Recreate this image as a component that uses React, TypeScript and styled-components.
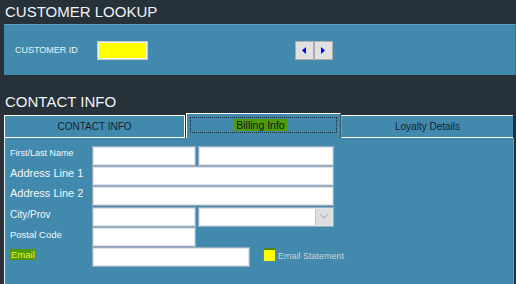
import React from 'react';
import styled, { createGlobalStyle } from 'styled-components';

const GlobalStyle = createGlobalStyle`
  html, body {
    margin: 0;
    padding: 0;
    background: #263139;
  }
  body {
    font-family: "Liberation Sans", Arial, sans-serif;
  }
`;

const Screen = styled.div`
  width: 516px;
  height: 284px;
  overflow: hidden;
  background: #263139;
`;

const SectionTitle = styled.h1<{ $top: number; $height: number }>`
  margin: 0;
  box-sizing: border-box;
  height: ${(p) => p.$height}px;
  padding: ${(p) => p.$top}px 0 0 5px;
  font-size: 15px;
  line-height: 17px;
  font-weight: normal;
  color: #f1f4f6;
`;

const LookupPanel = styled.div`
  margin-left: 4px;
  box-sizing: border-box;
  height: 51px;
  border-top: 1px solid #5ba1c4;
  border-right: 1px solid #33708f;
  background: #428aad;
  display: flex;
  align-items: center;
  padding-left: 11px;
`;

const LookupLabel = styled.span`
  width: 82px;
  font-size: 9px;
  color: #eef3f6;
`;

const IdInput = styled.input`
  width: 51px;
  height: 19px;
  box-sizing: border-box;
  margin: 0;
  padding: 0;
  background: #ffff00;
  border: 1px solid #c3ccd4;
  box-shadow: inset 0 0 0 1px #eef2f4;
  outline: none;
`;

const NavGroup = styled.div`
  display: flex;
  margin-left: 147px;
`;

const NavButton = styled.button`
  width: 19px;
  height: 19px;
  box-sizing: border-box;
  margin: 0;
  padding: 0;
  background: #e1e1e1;
  border: 1px solid #adadad;
  display: flex;
  align-items: center;
  justify-content: center;
  cursor: pointer;
`;

const TabRow = styled.div`
  display: flex;
  align-items: flex-end;
  margin-left: 4px;
  height: 25px;
`;

const Tab = styled.div<{ $width: number }>`
  width: ${(p) => p.$width}px;
  height: 23px;
  box-sizing: border-box;
  background: #428aad;
  border-top: 1px solid #ffffff;
  border-left: 1px solid #ffffff;
  border-bottom: 1px solid #ffffff;
  display: flex;
  align-items: center;
  justify-content: center;
  font-size: 10px;
  color: #17222c;
`;

const FirstTab = styled(Tab)`
  border-right: 1px solid #ffffff;
`;

const LastTab = styled(Tab)`
  border-left: 1px solid #9d8f80;
`;

const ActiveTab = styled.div`
  width: 155px;
  height: 25px;
  margin-left: 1px;
  box-sizing: border-box;
  background: #428aad;
  border-top: 1px solid #ffffff;
  border-left: 1px solid #ffffff;
  border-right: 1px solid #3b5566;
  padding: 3px 3px 5px 3px;
  display: flex;
`;

const FocusRing = styled.div`
  flex: 1;
  border: 1px dotted #1d2b36;
  display: flex;
  align-items: center;
  justify-content: center;
  padding-right: 6px;
`;

const Highlight = styled.span<{ $text?: string }>`
  background: #4f9a08;
  color: ${(p) => p.$text || '#10181e'};
  padding: 0 1px;
`;

const TabText = styled(Highlight)`
  font-size: 10.5px;
  padding: 0 2px;
`;

const ContentPanel = styled.div`
  margin-left: 4px;
  width: 510px;
  height: 146px;
  box-sizing: border-box;
  background: #428aad;
  border-left: 1px solid #e6eef2;
  border-right: 1px solid #86929c;
  padding: 8px 0 0 5px;
`;

const FormRow = styled.div`
  display: flex;
  align-items: flex-start;
  height: 20.2px;
`;

const FieldLabel = styled.div<{ $size: number }>`
  width: 82px;
  font-size: ${(p) => p.$size}px;
  line-height: 13px;
  padding-top: 1px;
  color: #f4f7f9;
  white-space: nowrap;
`;

const TextInput = styled.input<{ $width: number }>`
  width: ${(p) => p.$width}px;
  height: 20px;
  box-sizing: border-box;
  margin: 0 2px 0 0;
  padding: 0;
  background: #ffffff;
  border: 1px solid #9aabbc;
  box-shadow: inset 0 0 0 1px #dbe4ee;
  outline: none;
`;

const Select = styled.div`
  width: 136px;
  height: 20px;
  box-sizing: border-box;
  background: #ffffff;
  border: 1px solid #9aabbc;
  box-shadow: inset 0 0 0 1px #dbe4ee;
  display: flex;
  justify-content: flex-end;
  padding: 1px;
`;

const SelectArrow = styled.div`
  width: 16px;
  height: 100%;
  background: #dedede;
  border-left: 1px solid #c8c8c8;
  display: flex;
  align-items: center;
  justify-content: center;
`;

const CheckBox = styled.div`
  margin: 1px 0 0 11px;
  width: 12px;
  height: 13px;
  box-sizing: border-box;
  background: #ffff00;
  border-top: 2px solid #4e8a12;
  border-left: 1px solid #6a9a2a;
`;

const CheckLabel = styled.span`
  margin-left: 3px;
  font-size: 9px;
  line-height: 18px;
  color: #c9d2d8;
  white-space: nowrap;
`;

function Arrow({ dir }: { dir: 'left' | 'right' }) {
  const points = dir === 'left' ? '4,0 0,3.5 4,7' : '0,0 4,3.5 0,7';
  return (
    <svg width="5" height="7" viewBox="0 0 5 7">
      <polygon points={points} fill="#0000ff" />
    </svg>
  );
}

export default function App() {
  return (
    <Screen>
      <GlobalStyle />
      <SectionTitle $top={3} $height={24}>CUSTOMER LOOKUP</SectionTitle>
      <LookupPanel>
        <LookupLabel>CUSTOMER ID</LookupLabel>
        <IdInput readOnly />
        <NavGroup>
          <NavButton aria-label="previous"><Arrow dir="left" /></NavButton>
          <NavButton aria-label="next"><Arrow dir="right" /></NavButton>
        </NavGroup>
      </LookupPanel>

      <SectionTitle $top={18} $height={38}>CONTACT INFO</SectionTitle>
      <TabRow>
        <FirstTab $width={181}>CONTACT INFO</FirstTab>
        <ActiveTab>
          <FocusRing>
            <TabText>Billing Info</TabText>
          </FocusRing>
        </ActiveTab>
        <LastTab $width={172}>Loyalty Details</LastTab>
      </TabRow>

      <ContentPanel>
        <FormRow>
          <FieldLabel $size={9}>First/Last Name</FieldLabel>
          <TextInput $width={104} readOnly />
          <TextInput $width={136} readOnly />
        </FormRow>
        <FormRow>
          <FieldLabel $size={11}>Address Line 1</FieldLabel>
          <TextInput $width={242} readOnly />
        </FormRow>
        <FormRow>
          <FieldLabel $size={11}>Address Line 2</FieldLabel>
          <TextInput $width={242} readOnly />
        </FormRow>
        <FormRow>
          <FieldLabel $size={10}>City/Prov</FieldLabel>
          <TextInput $width={104} readOnly />
          <Select>
            <SelectArrow>
              <svg width="8" height="5" viewBox="0 0 8 5">
                <polyline points="0.5,0.5 4,4 7.5,0.5" fill="none" stroke="#9a9a9a" strokeWidth="1" />
              </svg>
            </SelectArrow>
          </Select>
        </FormRow>
        <FormRow>
          <FieldLabel $size={9.5}>Postal Code</FieldLabel>
          <TextInput $width={104} readOnly />
        </FormRow>
        <FormRow>
          <FieldLabel $size={9.5}>
            <Highlight $text="#e8f23a">Email</Highlight>
          </FieldLabel>
          <TextInput $width={158} readOnly />
          <CheckBox />
          <CheckLabel>Email Statement</CheckLabel>
        </FormRow>
      </ContentPanel>
    </Screen>
  );
}
